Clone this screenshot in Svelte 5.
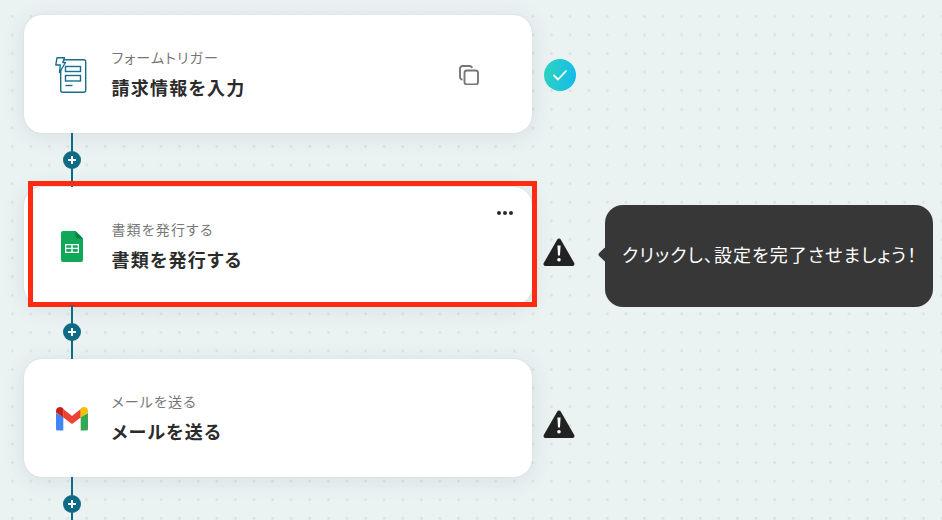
<script lang="ts">
  const warnPath = "M17 3.5L3.5 27h27z";
</script>

<div class="canvas">
  <div class="step">
    <div class="card">
      <svg class="app-icon" width="34" height="38" viewBox="0 0 34 38" fill="none" stroke="#176f8a" stroke-width="1.4">
        <rect x="5.700" y="2.700" width="25" height="32.500" rx="2"/>
        <path d="M2 .8h7.500L7.800 5.500h2.700L4.500 15.500l.8-7.500H.8z" stroke-linejoin="round" fill="#fff"/>
        <rect x="10.500" y="9.500" width="15" height="5"/>
        <rect x="10.500" y="18.500" width="15" height="5.500"/>
        <path d="M10.500 28.500h7"/>
      </svg>
      <div class="labels">
        <p class="sub">フォームトリガー</p>
        <p class="title">請求情報を入力</p>
      </div>
      <svg class="copy" width="20" height="20" viewBox="0 0 20 20" fill="none" stroke="#777" stroke-width="1.9">
        <rect x="5.500" y="5.500" width="13.500" height="14" rx="2.500"/>
        <path d="M3.600 14.600A2.600 2.600 0 0 1 1 12V3.600A2.600 2.600 0 0 1 3.600 1h6.800A2.600 2.600 0 0 1 13 3"/>
      </svg>
    </div>
    <div class="badge done">
      <svg width="16" height="16" viewBox="0 0 16 16" fill="none" stroke="#fff" stroke-width="1.8" stroke-linecap="round" stroke-linejoin="round"><path d="M2 8.500l4 4 8-8.500"/></svg>
    </div>
  </div>

  <div class="link"><span class="plus"></span></div>

  <div class="step">
    <div class="card">
      <svg class="app-icon sheets" width="22" height="31" viewBox="0 0 22 31">
        <path d="M2 0h12.500L22 7.500V29a2 2 0 0 1-2 2H2a2 2 0 0 1-2-2V2a2 2 0 0 1 2-2z" fill="#0fa858"/>
        <path d="M14.500 0L22 7.500h-5.500a2 2 0 0 1-2-2z" fill="#0b7f42"/>
        <path d="M4 13h14v9H4z M5.300 14.300v2.500h5v-2.500z M11.700 14.300v2.500h5v-2.500z M5.300 18.100v2.600h5v-2.600z M11.700 18.100v2.600h5v-2.600z" fill="#fff" fill-rule="evenodd"/>
      </svg>
      <div class="labels">
        <p class="sub">書類を発行する</p>
        <p class="title">書類を発行する</p>
      </div>
      <div class="more"><i></i><i></i><i></i></div>
      <div class="frame"></div>
    </div>
    <svg class="warn" width="34" height="30" viewBox="0 0 34 30">
      <path d={warnPath} fill="#222" stroke="#222" stroke-width="4" stroke-linejoin="round"/>
      <path d="M15.400 8.500h3.200l-.6 10h-2z" fill="#fff"/>
      <circle cx="17" cy="22.800" r="1.800" fill="#fff"/>
    </svg>
    <div class="tip">クリックし、設定を完了させましょう！</div>
  </div>

  <div class="link"><span class="plus"></span></div>

  <div class="step">
    <div class="card">
      <svg class="app-icon gmail" width="32" height="24" viewBox="0 0 32 24">
        <path d="M0 6V22a1.500 1.500 0 0 0 1.500 1.500H7.300V10z" fill="#4285f4"/>
        <path d="M32 6V22a1.500 1.500 0 0 1-1.500 1.500H24.700V10z" fill="#34a853"/>
        <path d="M7.300 2L16 9l8.700-7v8.500L16 17l-8.700-6.500z" fill="#ea4335"/>
        <path d="M0 4C0 .8 3.800-1 6.300.8L7.300 1.600v8.900L0 5.500z" fill="#c5221f"/>
        <path d="M32 4C32 .8 28.200-1 25.700.8L24.700 1.600v8.900L32 5.500z" fill="#fbbc04"/>
      </svg>
      <div class="labels">
        <p class="sub">メールを送る</p>
        <p class="title">メールを送る</p>
      </div>
    </div>
    <svg class="warn" width="34" height="30" viewBox="0 0 34 30">
      <path d={warnPath} fill="#222" stroke="#222" stroke-width="4" stroke-linejoin="round"/>
      <path d="M15.400 8.500h3.200l-.6 10h-2z" fill="#fff"/>
      <circle cx="17" cy="22.800" r="1.800" fill="#fff"/>
    </svg>
  </div>

  <div class="link"><span class="plus"></span></div>
</div>

<style>
  :global(body) {
    margin: 0;
    overflow: hidden;
  }

  .canvas {
    box-sizing: border-box;
    width: 942px;
    height: 520px;
    padding: 15px 0 0 24px;
    overflow: hidden;
    background-color: #eaf2f2;
    background-image: radial-gradient(circle, #d9e1e1 1.1px, transparent 1.5px);
    background-size: 18.6px 18.6px;
    background-position: 3px 7px;
    font-family: "Noto Sans CJK JP", "Noto Sans", sans-serif;
    font-feature-settings: "palt";
  }

  .step {
    display: flex;
    align-items: center;
    height: 118px;
  }

  .card {
    position: relative;
    display: flex;
    align-items: center;
    box-sizing: border-box;
    width: 508px;
    height: 118px;
    flex: none;
    background: #fff;
    border-radius: 18px;
    box-shadow: 0 0 1px rgba(60, 80, 80, 0.25), 0 3px 22px rgba(60, 80, 80, 0.1);
  }

  .app-icon {
    position: absolute;
    left: 31px;
    top: 42px;
  }

  .sheets {
    left: 37px;
    top: 44px;
  }

  .gmail {
    left: 32px;
    top: 48px;
  }

  .labels {
    margin-left: 87.500px;
  }

  .sub {
    margin: 0;
    font-size: 14px;
    line-height: 20px;
    letter-spacing: 0.08em;
    color: #777;
  }

  .title {
    margin: 6px 0 0;
    font-size: 18px;
    line-height: 28px;
    font-weight: 700;
    letter-spacing: 0.07em;
    color: #2b2b2b;
  }

  .copy {
    position: absolute;
    left: 435px;
    top: 50px;
  }

  .more {
    position: absolute;
    top: 24px;
    right: 19px;
    display: flex;
    gap: 2px;
  }

  .more i {
    width: 4px;
    height: 4px;
    border-radius: 50%;
    background: #2b2b2b;
  }

  .frame {
    position: absolute;
    top: -6px;
    left: 4px;
    right: -5px;
    bottom: -2px;
    border: 5px solid #ff2a12;
  }

  .badge {
    display: flex;
    align-items: center;
    justify-content: center;
    width: 32px;
    height: 32px;
    margin: 2px 0 0 12px;
    border-radius: 50%;
  }

  .done {
    background: linear-gradient(100deg, #2fd6bd, #13b9ec);
  }

  .warn {
    flex: none;
    margin: 12px 0 0 10px;
  }

  .tip {
    position: relative;
    box-sizing: border-box;
    width: 328px;
    height: 102px;
    margin: 20px 0 0 29px;
    flex: none;
    display: flex;
    align-items: center;
    padding: 0 0 4px 17px;
    background: #373737;
    border-radius: 18px;
    color: #fff;
    font-size: 18px;
    letter-spacing: 0.06em;
    white-space: nowrap;
  }

  .tip::before {
    content: "";
    position: absolute;
    left: -5px;
    top: 44px;
    width: 11px;
    height: 11px;
    background: #373737;
    transform: rotate(45deg);
    border-radius: 2px;
  }

  .link {
    position: relative;
    width: 2px;
    height: 54px;
    margin-left: 47px;
    background: #0f6a86;
  }

  .plus {
    position: absolute;
    left: -8px;
    top: 18px;
    width: 18px;
    height: 18px;
    border-radius: 50%;
    background:
      linear-gradient(#fff, #fff) center / 8px 2px no-repeat,
      linear-gradient(#fff, #fff) center / 2px 8px no-repeat,
      #0f6a86;
  }
</style>
